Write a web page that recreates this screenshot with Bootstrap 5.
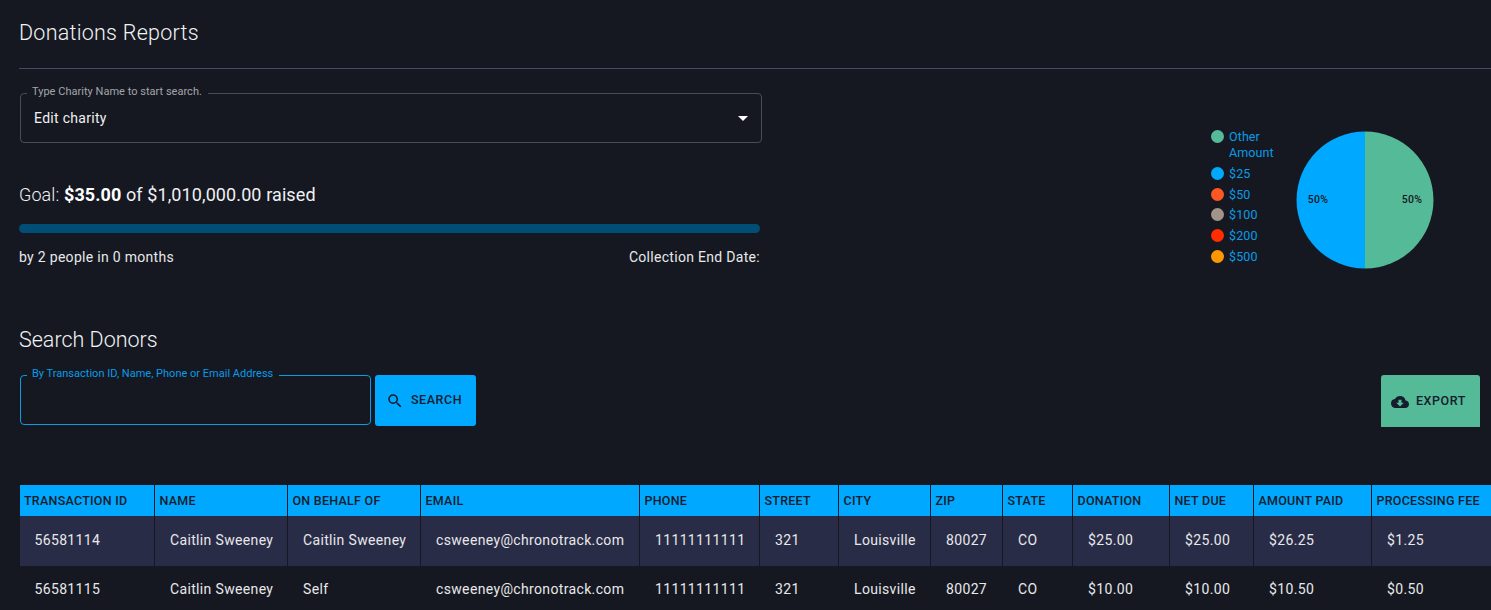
<!DOCTYPE html>
<html lang="en">
<head>
<meta charset="utf-8">
<title>Donations Reports</title>
<link href="https://cdn.jsdelivr.net/npm/bootstrap@5.3.0/dist/css/bootstrap.min.css" rel="stylesheet">
<style>
html,body{height:100%;margin:0;background:#151821;overflow:hidden}
body{font-family:Roboto,"Liberation Sans",sans-serif;color:#e8e8ea;font-size:14px}
.page{height:610px;overflow:hidden;padding-left:19px}
.page-title{font-size:21.5px;font-weight:300;line-height:28px;margin:0;padding-top:19px;letter-spacing:.25px;color:#f2f3f5}
.rule{height:1px;background:#434a66;margin-top:21px}
.top-row{height:233px}
.left-col{width:743px}
.outlined{position:relative;margin-left:1px;border:1px solid #4a4c55;border-radius:4px;height:50px;margin-top:24px;width:742px;padding-left:13px;color:#f0f0f2;letter-spacing:.3px;line-height:48px}
.float-label{position:absolute;left:6px;top:-8px;background:#151821;padding:0 6px 0 5px;font-size:11px;line-height:12px;letter-spacing:.02px;color:#a3a5ab}
.caret{position:absolute;right:13px;top:22px;width:0;height:0;border-left:5px solid transparent;border-right:5px solid transparent;border-top:5px solid #fff}
.goal{font-size:18px;line-height:24px;margin-top:40px;letter-spacing:.1px;font-weight:400;color:#f0f0f2}
.goal .lite{font-weight:300}
.goal b{font-weight:700;color:#fff}
.bar{height:9px;width:741px;border-radius:5px;background:#004e76;margin-top:17px}
.meta{width:741px;margin-top:14px;line-height:20px;letter-spacing:.3px}
.chart-col{margin-right:57px;margin-top:62px;gap:21px}
.legend{width:64px;font-size:12.5px;color:#0a9be6;line-height:16px;letter-spacing:.1px;margin-top:-2px}
.legend-item{display:flex;gap:5px;margin-bottom:4.8px}
.legend-dot{flex:none;width:13px;height:13px;border-radius:50%;margin-top:1px}
.chart-label{font-family:Roboto,sans-serif;font-size:10.5px;font-weight:500;fill:#151821;letter-spacing:.3px}
.sub-title{font-size:21.5px;font-weight:300;line-height:28px;margin:0;padding-top:24px;letter-spacing:0;color:#f2f3f5}
.search-row{margin-top:21px;height:52px;padding-right:11px}
.search-box{position:relative;margin-left:1px;width:351px;height:50px;border:1px solid #0a9be6;border-radius:4px}
.search-box .float-label{color:#0a9be6;top:-8px;letter-spacing:.01px}
.act{display:inline-flex;align-items:center;border:0;border-radius:3px;font-size:12.5px;font-weight:500;letter-spacing:.55px;color:#151c2b;padding:0}
.act-search{margin-left:4px;width:101px;height:51px;background:#00a8ff;padding-left:11px;gap:7px}
.act-export{width:99px;height:52px;background:#55ba98;padding-left:10px;gap:7px;padding-top:1px;border-radius:3px 3px 0 0}
.table-wrap{margin-left:1px;margin-top:58px;overflow:hidden}
.donor-table{table-layout:fixed;width:1500px;margin:0;border-collapse:collapse;--bs-table-bg:transparent;--bs-table-color:#e8e8ea;--bs-table-border-color:transparent}
.donor-table th{height:31px;padding:1px 0 0 5px;background:#00a8ff;color:#151c2b;font-size:12.5px;font-weight:500;letter-spacing:.25px;border-right:1px solid #151821;border-bottom:0;white-space:nowrap;vertical-align:middle}
.donor-table td{height:50px;padding:0 0 1px 15.5px;font-size:14px;letter-spacing:.35px;border-right:1px solid #151821;border-bottom:0;white-space:nowrap;vertical-align:middle}
.donor-table th:first-child{padding-left:4px}
.donor-table td:first-child{padding-left:14.500px}
.donor-table tbody tr:first-child td{background:#292c47}
.donor-table tbody tr:nth-child(2) td{border-right-color:transparent;padding-bottom:3px}
.w1{width:134px}.w2,.w3{width:133px}.w4{width:219px}.w5{width:120px}.w6{width:79px}.w7{width:92px}.w8{width:72px}.w9{width:70px}.w10{width:97px}.w11{width:84px}.w12{width:118px}.w13{width:149px}
</style>
</head>
<body>
<div class="page">
  <h1 class="page-title">Donations Reports</h1>
  <div class="rule"></div>
  <div class="top-row d-flex justify-content-between">
    <div class="left-col">
      <div class="outlined">
        <span class="float-label">Type Charity Name to start search.</span>
        Edit charity
        <span class="caret"></span>
      </div>
      <div class="goal"><span class="lite">Goal:</span> <b>$35.00</b> of $1,010,000.00 raised</div>
      <div class="bar"></div>
      <div class="meta d-flex justify-content-between"><span>by 2 people in 0 months</span><span>Collection End Date:</span></div>
    </div>
    <div class="chart-col d-flex align-items-start">
      <div class="legend">
        <div class="legend-item"><span class="legend-dot" style="background:#55ba98"></span><span>Other Amount</span></div>
        <div class="legend-item"><span class="legend-dot" style="background:#00a8ff"></span><span>$25</span></div>
        <div class="legend-item"><span class="legend-dot" style="background:#ff5722"></span><span>$50</span></div>
        <div class="legend-item"><span class="legend-dot" style="background:#a1958a"></span><span>$100</span></div>
        <div class="legend-item"><span class="legend-dot" style="background:#ff2d00"></span><span>$200</span></div>
        <div class="legend-item"><span class="legend-dot" style="background:#ff9800"></span><span>$500</span></div>
      </div>
      <svg width="138" height="138" viewBox="0 0 138 138">
        <path d="M69 .5A68.5 68.5 0 0 1 69 137.500Z" fill="#55ba98"/>
        <path d="M69 .5A68.500 68.500 0 0 0 69 137.500Z" fill="#00a8ff"/>
        <text class="chart-label" x="116" y="72" text-anchor="middle">50%</text>
        <text class="chart-label" x="22" y="72" text-anchor="middle">50%</text>
      </svg>
    </div>
  </div>
  <h2 class="sub-title">Search Donors</h2>
  <div class="search-row d-flex align-items-start">
    <div class="search-box"><span class="float-label">By Transaction ID, Name, Phone or Email Address</span></div>
    <button type="button" class="act act-search">
      <svg width="18" height="18" viewBox="0 0 24 24" fill="#151c2b"><path d="M15.500 14h-.79l-.28-.27A6.470 6.470 0 0 0 16 9.500 6.500 6.500 0 1 0 9.500 16c1.610 0 3.090-.59 4.230-1.570l.27.28v.79l5 4.990L20.490 19l-4.990-5zm-6 0C7.010 14 5 11.990 5 9.500S7.010 5 9.500 5 14 7.010 14 9.500 11.990 14 9.500 14z"/></svg>
      SEARCH
    </button>
    <button type="button" class="act act-export ms-auto">
      <svg width="18" height="18" viewBox="0 0 24 24" fill="#151c2b"><path d="M19.350 10.040A7.490 7.490 0 0 0 12 4C9.110 4 6.600 5.640 5.350 8.040A5.994 5.994 0 0 0 0 14c0 3.310 2.690 6 6 6h13c2.760 0 5-2.240 5-5 0-2.640-2.050-4.780-4.650-4.960zM17 13l-5 5-5-5h3V9h4v4h3z"/></svg>
      EXPORT
    </button>
  </div>
  <div class="table-wrap">
    <table class="table donor-table">
      <colgroup><col class="w1"><col class="w2"><col class="w3"><col class="w4"><col class="w5"><col class="w6"><col class="w7"><col class="w8"><col class="w9"><col class="w10"><col class="w11"><col class="w12"><col class="w13"></colgroup>
      <thead><tr><th>TRANSACTION ID</th><th>NAME</th><th>ON BEHALF OF</th><th>EMAIL</th><th>PHONE</th><th>STREET</th><th>CITY</th><th>ZIP</th><th>STATE</th><th>DONATION</th><th>NET DUE</th><th>AMOUNT PAID</th><th>PROCESSING FEE</th></tr></thead>
      <tbody>
        <tr><td>56581114</td><td>Caitlin Sweeney</td><td>Caitlin Sweeney</td><td>csweeney@chronotrack.com</td><td>11111111111</td><td>321</td><td>Louisville</td><td>80027</td><td>CO</td><td>$25.00</td><td>$25.00</td><td>$26.25</td><td>$1.25</td></tr>
        <tr><td>56581115</td><td>Caitlin Sweeney</td><td>Self</td><td>csweeney@chronotrack.com</td><td>11111111111</td><td>321</td><td>Louisville</td><td>80027</td><td>CO</td><td>$10.00</td><td>$10.00</td><td>$10.50</td><td>$0.50</td></tr>
      </tbody>
    </table>
  </div>
</div>
</body>
</html>
